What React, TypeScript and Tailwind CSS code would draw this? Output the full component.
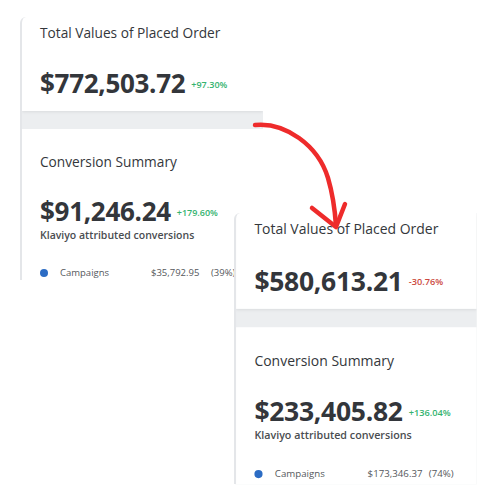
import React from "react";

type PanelProps = {
  total: string;
  totalDelta: string;
  totalUp: boolean;
  conv: string;
  convDelta: string;
  campaigns: string;
  pct: string;
  className: string;
};

function Panel(p: PanelProps) {
  return (
    <div
      className={`absolute bg-[#eceef0] rounded-tl-[6px] overflow-hidden border-l-2 border-[#e4e6e9] ${p.className}`}
      style={{ fontFamily: '"Open Sans", "Liberation Sans", sans-serif' }}
    >
      <div className="h-[94px] bg-white pl-[18px] pt-[7px] shadow-[0_1px_3px_rgba(0,0,0,0.08)]">
        <div className="text-[13.7px] leading-[18px] text-[#34373b]">Total Values of Placed Order</div>
        <div className="flex items-center gap-[6px] mt-[26px] h-[30px]">
          <span className="text-[26px] font-bold leading-[30px] text-[#33363b] tracking-[-0.3px]">{p.total}</span>
          <span
            className={`text-[9px] font-semibold mt-[4px] ${p.totalUp ? "text-[#34b36f]" : "text-[#cc4a3f]"}`}
          >
            {p.totalDelta}
          </span>
        </div>
      </div>
      <div className="h-[18px]" />
      <div className="h-[160px] bg-white pl-[18px] pt-[24px]">
        <div className="text-[13.7px] leading-[18px] text-[#34373b]">Conversion Summary</div>
        <div className="flex items-center gap-[6px] mt-[25px] h-[30px]">
          <span className="text-[26px] font-bold leading-[30px] text-[#33363b] tracking-[-0.3px]">{p.conv}</span>
          <span className="text-[9px] font-semibold mt-[4px] text-[#34b36f]">{p.convDelta}</span>
        </div>
        <div className="text-[10.5px] font-semibold leading-[14px] text-[#4a4d51] mt-[2px]">
          Klaviyo attributed conversions
        </div>
        <div className="flex items-center mt-[24px] text-[9.5px] text-[#55585c] leading-[14px] whitespace-nowrap">
          <span className="w-[8px] h-[8px] rounded-full bg-[#2c6cc4]" />
          <span className="ml-[12px] w-[91px]">Campaigns</span>
          <span className="w-[60px]">{p.campaigns}</span>
          <span>{p.pct}</span>
        </div>
      </div>
    </div>
  );
}

export default function App() {
  return (
    <div className="relative w-[500px] h-[500px] bg-white overflow-hidden">
      <Panel
        className="left-[20px] top-[17px] w-[243px] h-[263px]"
        total="$772,503.72"
        totalDelta="+97.30%"
        totalUp
        conv="$91,246.24"
        convDelta="+179.60%"
        campaigns="$35,792.95"
        pct="(39%)"
      />
      <Panel
        className="left-[234px] top-[213px] w-[238px] h-[266px] origin-top-left scale-[1.02]"
        total="$580,613.21"
        totalDelta="-30.76%"
        totalUp={false}
        conv="$233,405.82"
        convDelta="+136.04%"
        campaigns="$173,346.37"
        pct="(74%)"
      />
      <svg className="absolute left-0 top-0" width="500" height="500" viewBox="0 0 500 500">
        <path
          d="M255 125 C 285 122, 318 145, 328 178 C 333 195, 335 210, 336 226"
          fill="none"
          stroke="#ee2b2b"
          strokeWidth="4.5"
          strokeLinecap="round"
        />
        <path
          d="M312 208 L 336 227 L 345 204"
          fill="none"
          stroke="#ee2b2b"
          strokeWidth="4.5"
          strokeLinecap="round"
          strokeLinejoin="round"
        />
      </svg>
    </div>
  );
}
